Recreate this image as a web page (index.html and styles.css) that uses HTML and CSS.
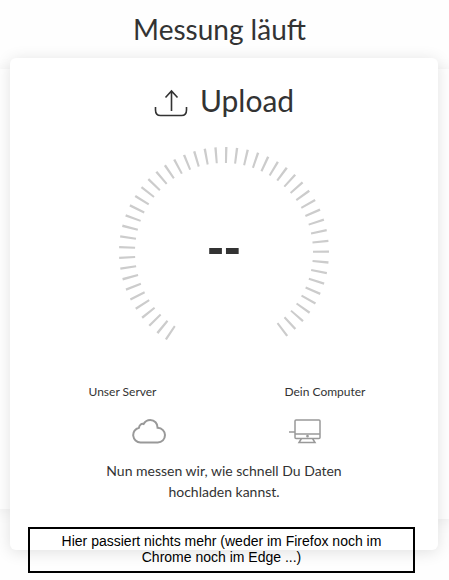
FILE: index.html
```html
<!DOCTYPE html>
<html lang="de">
<head>
<meta charset="utf-8">
<meta name="viewport" content="width=device-width, initial-scale=1">
<title>Messung läuft</title>
<link rel="stylesheet" href="styles.css">
</head>
<body>
<main>
  <h1 class="title">Messung läuft</h1>
  <div class="carousel">
    <div class="side side-prev"></div>
    <section class="card">
      <h2 class="card-title">
        <svg class="upload-icon" width="34" height="28" viewBox="0 0 34 28" aria-hidden="true">
          <path d="M1.500 18v3q0 5.500 5 5.500h21q5 0 5-5.500v-3M17.500 22V2M11.500 8.500l6-6.500 6 6.500"/>
        </svg>
        Upload
      </h2>
      <div class="gauge">
        <svg class="ticks" width="210" height="210" viewBox="0 0 210 210" aria-hidden="true">
          <path d="M52.24 186.39A97 97 0 1 1 162.49 183.12" pathLength="290.7"/>
        </svg>
        <output class="value">--</output>
      </div>
      <div class="labels"><span>Unser Server</span><span>Dein Computer</span></div>
      <div class="devices">
        <svg width="34" height="25" viewBox="0 0 34 25" aria-hidden="true">
          <path class="thick" d="M8.500 23.500a7.500 7.500 0 0 1-1.500-14.800c.3-2.800 2.700-4.400 4.600-3.700C13 2.500 15.500 1 18.300 1c4.300 0 7.300 3.300 7.300 7.800 4.400.3 7.400 3.500 7.400 7.300 0 4.200-3.200 7.400-7.200 7.400z"/>
        </svg>
        <svg class="computer" width="32" height="25" viewBox="0 0 32 25" aria-hidden="true">
          <path d="M7 1h23q1 0 1 1v16.500q0 1-1 1H7q-1 0-1-1V2q0-1 1-1zM6 15h25M12.500 19.500l-2.500 4h16l-2.500-4"/>
          <path d="M0 13h6"/>
          <circle cx="18.500" cy="17.200" r=".6"/>
        </svg>
      </div>
      <p class="message">Nun messen wir, wie schnell Du Daten hochladen kannst.</p>
    </section>
    <div class="side side-next"></div>
  </div>
  <p class="note">Hier passiert nichts mehr (weder im Firefox noch im Chrome noch im Edge ...)</p>
</main>
</body>
</html>
```
FILE: styles.css
```css
* { box-sizing: border-box; }

body {
  margin: 0;
  overflow-x: hidden;
  background: #fefefe;
  color: #333;
  font-family: Lato, "Open Sans", sans-serif;
}

h1, h2, p { margin: 0; font-weight: 400; }

svg { display: block; fill: none; }

.title {
  padding: 9px 10px 9px 0;
  font-size: 28px;
  line-height: 40px;
  text-align: center;
}

.carousel {
  display: grid;
  grid-template-columns: 10px 1fr 11px;
}

.card, .side {
  background: #fff;
  box-shadow: 0 2px 16px rgba(0, 0, 0, .12);
}

.side-prev { margin: 11px 0 41px; }
.side-next { margin: 11px 0 31px; }

.card {
  position: relative;
  z-index: 1;
  display: flex;
  flex-direction: column;
  align-items: center;
  padding: 22px 16px 48px;
  border-radius: 6px;
}

.card-title {
  display: flex;
  align-items: center;
  gap: 12px;
  font-size: 30px;
  line-height: 40px;
}

.upload-icon {
  margin-top: 6px;
  stroke: #333;
  stroke-width: 1.6;
}

.gauge {
  display: grid;
  place-items: center;
  margin-top: 27px;
}

.gauge > * { grid-area: 1 / 1; }

.ticks {
  stroke: #ccc;
  stroke-width: 16;
  stroke-dasharray: 1.3 4.606;
}

.value {
  padding-bottom: 10px;
  font: bold 50px/56px "Liberation Sans", sans-serif;
}

.labels {
  display: flex;
  gap: 128px;
  margin: 26px 0 0 6px;
  font-size: 12px;
  line-height: 18px;
}

.devices {
  display: flex;
  gap: 123px;
  margin: 18px 0 0 4px;
  stroke: #999;
}

.thick { stroke-width: 2; }

.computer { stroke-width: 1.5; }

.message {
  width: 260px;
  margin-top: 16px;
  font-size: 14px;
  line-height: 21px;
  text-align: center;
}

.note {
  position: relative;
  z-index: 2;
  margin: -23px 34px 0 28px;
  padding: 4px 24px 6px;
  border: 2px solid #000;
  color: #000;
  font: 14px/16px "Liberation Sans", Arial, sans-serif;
  text-align: center;
}
```
